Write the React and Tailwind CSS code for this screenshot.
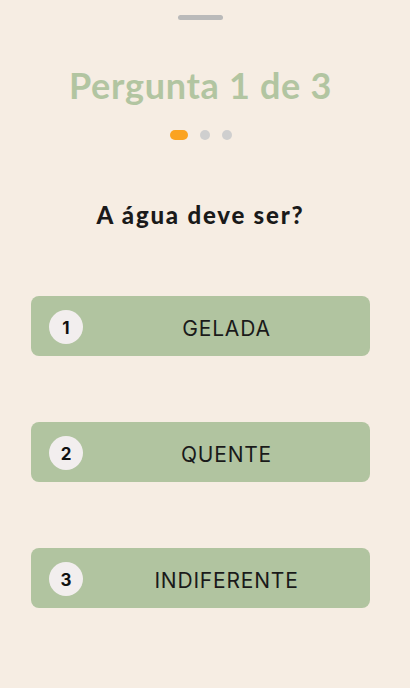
import React from 'react';

const QuizScreen = () => {
  const options = [
    { n: 1, label: "GELADA" },
    { n: 2, label: "QUENTE" },
    { n: 3, label: "INDIFERENTE" }
  ];

  return (
    <div className="w-[410px] h-[688px] bg-[#f6ede3] overflow-hidden">
      <div className="w-[401px] flex flex-col items-center">
        {/* drag handle */}
        <div className="mt-[15px] w-[45px] h-[5px] rounded-full bg-[#bababa]" />

        <h1 className="mt-[43px] text-[36px] leading-[44px] font-bold tracking-[0.7px] text-[#b2c5a1] font-['Lato',sans-serif]">
          Pergunta 1 de 3
        </h1>

        {/* progress dots */}
        <div className="mt-[23px] flex items-center gap-3">
          <div className="w-[18px] h-[10px] rounded-full bg-[#fba320]" />
          <div className="w-[10px] h-[10px] rounded-full bg-[#cfcfcf]" />
          <div className="w-[10px] h-[10px] rounded-full bg-[#cfcfcf]" />
        </div>

        <h2 className="mt-[60px] text-[24px] leading-[30px] font-black tracking-[1.8px] text-[#1a1a1a] font-['Lato',sans-serif]">
          A água deve ser?
        </h2>

        <div className="mt-[66px] flex flex-col gap-[66px] w-[339px]">
          {options.map((opt) => (
            <button
              key={opt.n}
              className="h-[60px] w-full rounded-lg bg-[#b1c4a0] flex items-center pl-[18px]"
            >
              <span className="mt-[2px] pt-[3px] w-[34px] h-[34px] rounded-full bg-[#f2eeee] flex items-center justify-center text-[17px] font-bold text-[#111] font-['Inter',sans-serif]">
                {opt.n}
              </span>
              <span className="flex-1 pt-[5px] text-center text-[21px] tracking-[0.8px] text-[#1a1a1a] font-['Inter',sans-serif]">
                {opt.label}
              </span>
            </button>
          ))}
        </div>
      </div>
    </div>
  );
};

export default function App() {
  return <QuizScreen />;
}
